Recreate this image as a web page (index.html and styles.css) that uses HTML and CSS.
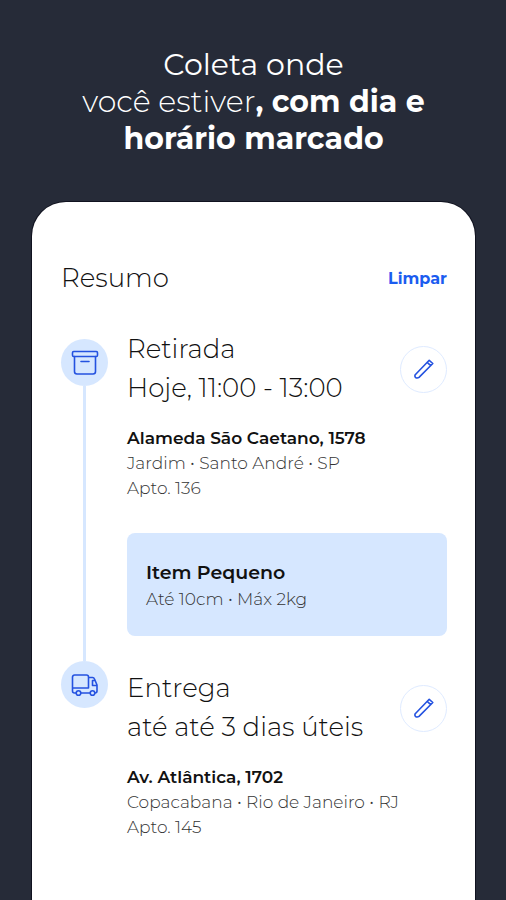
FILE: index.html
```html
<!DOCTYPE html>
<html lang="pt-BR">
<head>
<meta charset="utf-8">
<meta name="viewport" content="width=device-width, initial-scale=1">
<title>Resumo da coleta</title>
<link rel="stylesheet" href="styles.css">
</head>
<body>
<div class="page">
  <h1 class="headline"><span class="headline-lead">Coleta onde</span><br>você estiver<strong>, com dia e<br>horário marcado</strong></h1>
  <main class="sheet">
    <header class="sheet-header">
      <h2 class="sheet-title">Resumo</h2>
      <button class="clear" type="button">Limpar</button>
    </header>
    <ol class="steps">
      <li class="step step-pickup">
        <div class="rail">
          <span class="marker">
            <svg class="icon" viewBox="0 0 28 28" aria-hidden="true"><rect x="1.500" y="2.500" width="25" height="5" rx="1.200"/><path d="M3.500 7.500v15a2.500 2.500 0 0 0 2.500 2.500h16a2.500 2.500 0 0 0 2.500-2.500V7.500M10 12.500h8"/></svg>
          </span>
        </div>
        <div class="body">
          <div class="top">
            <h3 class="title">Retirada<br>Hoje, 11:00 - 13:00</h3>
            <button class="edit" type="button" aria-label="Editar retirada">
              <svg class="pencil" viewBox="0 0 22 22" aria-hidden="true"><path d="M2 17L16.200 2.300L19.800 5.500L6 19.400Q5 20.200 3.500 20Q1.500 19.500 2 17zM14.200 4.400l3.500 3.200"/></svg>
            </button>
          </div>
          <address class="address"><strong>Alameda São Caetano, 1578</strong><br>Jardim • Santo André • SP<br>Apto. 136</address>
          <section class="item">
            <h4 class="item-title">Item Pequeno</h4>
            <p class="item-info">Até 10cm • Máx 2kg</p>
          </section>
        </div>
      </li>
      <li class="step step-delivery">
        <div class="rail">
          <span class="marker">
            <svg class="icon" viewBox="0 0 28 28" aria-hidden="true"><path d="M5 22H3.500a2 2 0 0 1-2-2V6a2 2 0 0 1 2-2h12a2 2 0 0 1 2 2v11M1.500 17h16M17.500 6.500h4a2 2 0 0 1 1.900 1.300L26 14v6a2 2 0 0 1-2 2M10 22h9M24 9.500h-2.500v5H26"/><circle cx="7.500" cy="22" r="2.300"/><circle cx="21.500" cy="22" r="2.300"/></svg>
          </span>
        </div>
        <div class="body">
          <div class="top">
            <h3 class="title">Entrega<br>até até 3 dias úteis</h3>
            <button class="edit" type="button" aria-label="Editar entrega">
              <svg class="pencil" viewBox="0 0 22 22" aria-hidden="true"><path d="M2 17L16.200 2.300L19.800 5.500L6 19.400Q5 20.200 3.500 20Q1.500 19.500 2 17zM14.200 4.400l3.500 3.200"/></svg>
            </button>
          </div>
          <address class="address"><strong>Av. Atlântica, 1702</strong><br>Copacabana • Rio de Janeiro • RJ<br>Apto. 145</address>
        </div>
      </li>
    </ol>
  </main>
</div>
</body>
</html>
```
FILE: styles.css
```css
* {
  box-sizing: border-box;
}

body,
h1,
h2,
h3,
h4,
p,
ol {
  margin: 0;
  padding: 0;
}

body {
  background: #262b38;
  color: #111;
  font-family: Montserrat, Inter, "Open Sans", sans-serif;
}

button {
  padding: 0;
  background: none;
  border: 0;
  font: inherit;
  cursor: pointer;
}

.page {
  display: flex;
  flex-direction: column;
  min-height: 100vh;
  padding: 46px 31px 0 32px;
}

.headline {
  color: #fff;
  font-size: 30px;
  font-weight: 300;
  line-height: 37px;
  text-align: center;
}

.headline-lead {
  font-weight: 400;
}

.headline strong {
  font-weight: 700;
}

.sheet {
  flex: 1;
  margin-top: 45px;
  padding: 57px 28px 40px 29px;
  background: #fff;
  border-radius: 34px 34px 0 0;
  box-shadow: 0 0 0 1px #10121f;
}

.sheet-header {
  display: flex;
  align-items: center;
  justify-content: space-between;
}

.sheet-title,
.title {
  font-size: 26px;
  font-weight: 300;
  line-height: 39px;
}

.clear {
  color: #1b5cf0;
  font-size: 16px;
  font-weight: 700;
  line-height: 24px;
}

.steps {
  margin-top: 32px;
  list-style: none;
}

.step {
  display: flex;
  gap: 19px;
}

.rail {
  display: flex;
  flex: none;
  flex-direction: column;
  align-items: center;
}

.step-pickup .rail {
  padding-top: 9px;
}

.step-pickup .rail::after {
  content: "";
  flex: 1;
  width: 3px;
  background: #d6e7ff;
}

.marker,
.edit {
  display: grid;
  flex: none;
  place-items: center;
  width: 47px;
  height: 47px;
  border-radius: 50%;
}

.marker {
  background: #d6e7ff;
}

.edit {
  border: 1px solid #dfebff;
}

.icon,
.pencil {
  fill: none;
  stroke: #2452e0;
  stroke-width: 1.6;
  stroke-linecap: round;
  stroke-linejoin: round;
}

.icon {
  width: 28px;
  height: 28px;
}

.pencil {
  width: 22px;
  height: 22px;
}

.body {
  flex: 1;
  min-width: 0;
}

.step-pickup .body {
  padding-bottom: 25px;
}

.step-delivery .body {
  padding-top: 8px;
}

.top {
  display: flex;
  align-items: center;
  justify-content: space-between;
}

.address {
  margin-top: 18px;
  color: #333;
  font-size: 17px;
  font-style: normal;
  font-weight: 300;
  line-height: 25px;
}

.address strong {
  color: #111;
  font-weight: 600;
}

.item {
  margin-top: 32px;
  padding: 26px 19px 24px;
  background: #d6e7ff;
  border-radius: 8px;
}

.item-title {
  font-size: 19px;
  font-weight: 600;
  line-height: 27px;
}

.item-info {
  color: #333;
  font-size: 17px;
  font-weight: 300;
  line-height: 26px;
}
```
